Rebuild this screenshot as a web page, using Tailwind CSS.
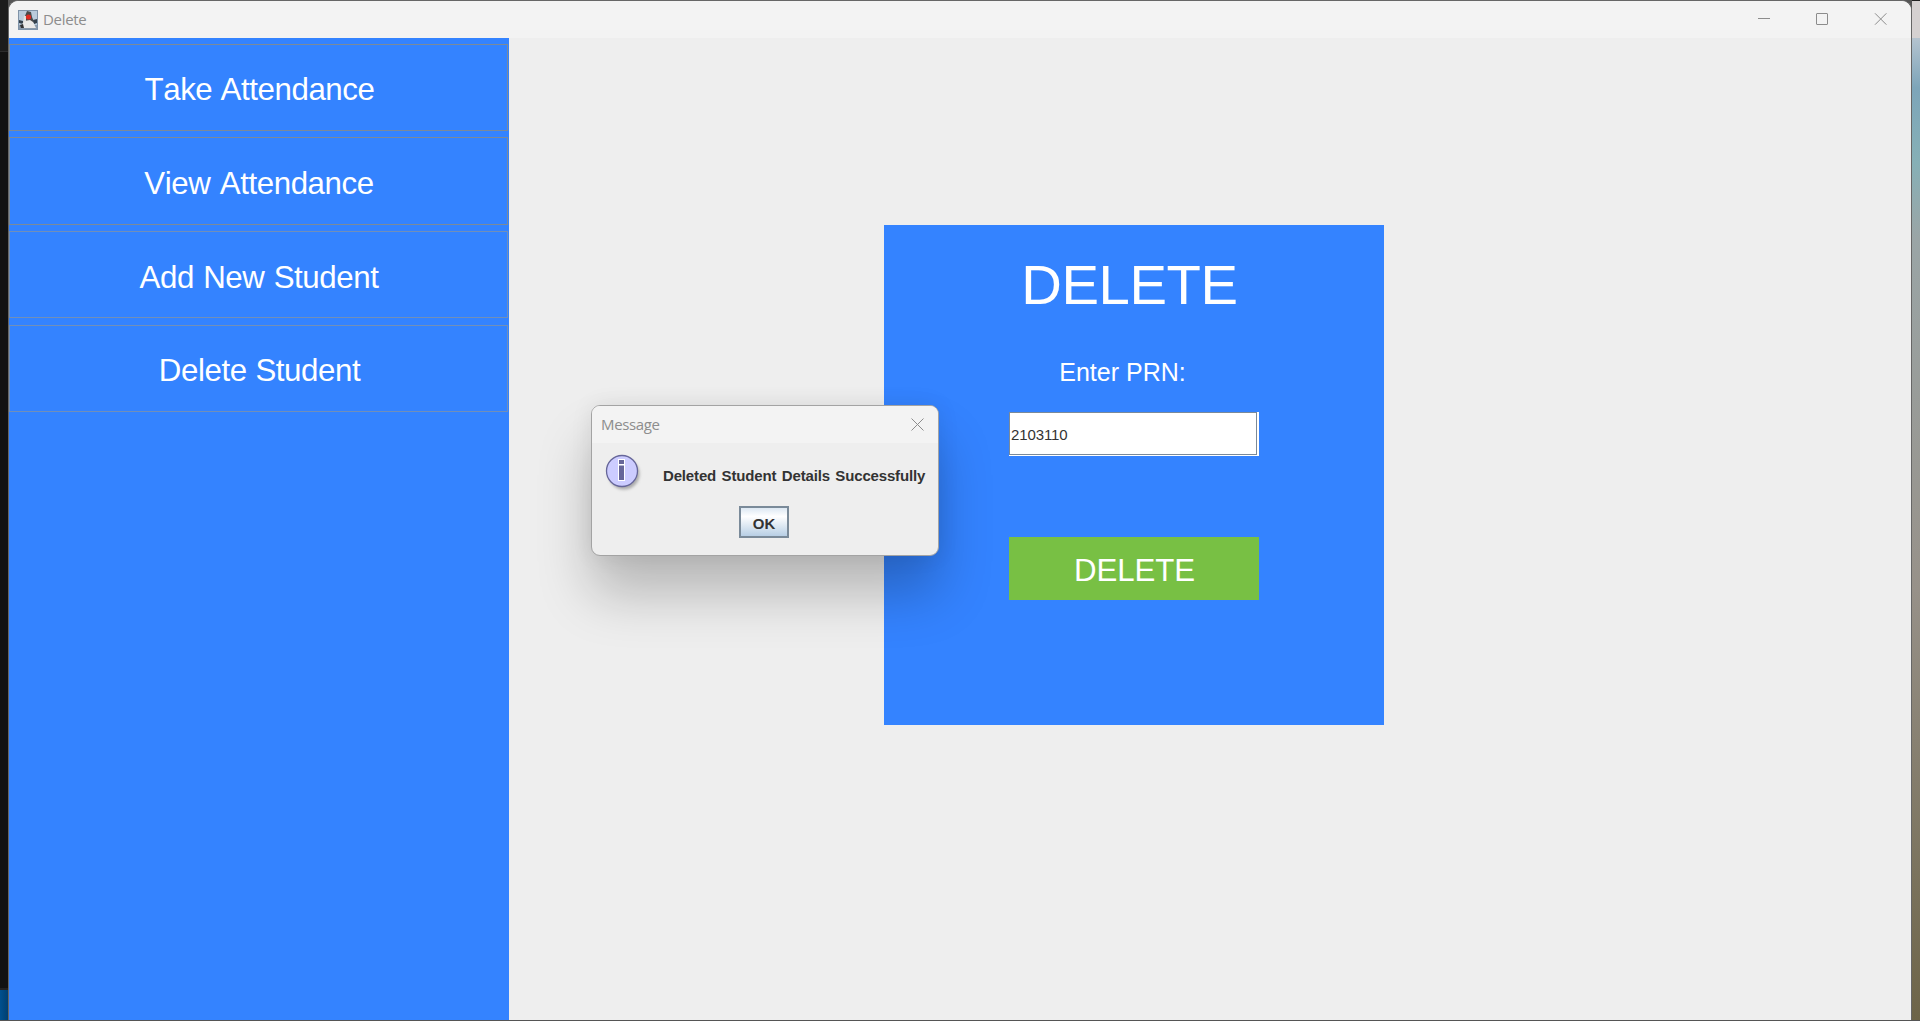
<!DOCTYPE html>
<html lang="en"><head><meta charset="utf-8"><title>Delete</title>
<script src="https://cdn.jsdelivr.net/npm/@tailwindcss/browser@4"></script></head>
<body class="h-[1021px] w-[1920px] overflow-hidden bg-[#555] font-['Liberation_Sans',Arial,sans-serif]">
<div class="relative flex h-full w-full pb-px">
  <div class="flex h-full w-[8px] flex-col bg-[#121212]">
    <div class="h-[52px] border-b border-[#2c2c2c] bg-[#1c1c1c]"></div>
    <div class="grow bg-[#121212]"></div>
    <div class="h-[32px] border-t-2 border-[#222] bg-linear-to-r from-[#00508f] to-[#003f70]"></div>
  </div>
  <div class="flex h-full w-[1904px] flex-col overflow-hidden rounded-t-[10px] border-x border-t border-[#666] bg-[#eeeeee]">
    <header class="flex h-[37px] shrink-0 items-center bg-[#f3f3f3] pl-[9px]">
      <svg class="h-5 w-5" viewBox="0 0 20 20">
        <rect x=".5" y=".5" width="19" height="19" fill="#b9cbdc" stroke="#7f93a8"/>
        <path d="M1 15h18v4H1z" fill="#8b9aab"/>
        <path d="M7 6 9 1l4 1 1 5 2 5-2 3-8 1-1-3 2-4z" fill="#4a4a4a"/>
        <path d="M1 10l4 1v3l-4-1zM15 10l4-1v4l-3 1z" fill="#35414c"/>
        <path d="M6 11l6-1 3 2 3 6H5l-2-2z" fill="#eceae8"/>
        <path d="M6 6l2 0 0 5-3 2z" fill="#e4e2e0"/>
        <path d="M2 15l3-1 1 4-3 0z" fill="#333"/>
        <circle cx="10.500" cy="7" r="2.600" fill="#e02c24"/>
      </svg>
      <span class="ml-[5px] font-['Open_Sans',sans-serif] text-[15px] tracking-[-0.3px] text-[#8d8d8d]">Delete</span>
      <svg class="ml-auto mr-[24px] h-3 w-[130px] -translate-y-px" viewBox="0 0 130 12" fill="none" stroke="#8c8c8c">
        <path d="M1 5.500h12"/><rect x="59.500" y=".5" width="11" height="11" rx=".5"/><path d="M118 .3l11.400 11.400M129.400 .3 118 11.700"/>
      </svg>
    </header>
    <div class="flex min-h-0 grow">
      <nav class="flex w-[500px] shrink-0 flex-col bg-[#3483ff] pr-px pt-[6px] text-[31.25px] tracking-[-0.42px] text-white [font-kerning:none]">
        <button class="mb-[6px] h-[87px] border border-[#7b8a99] pl-[2px] pt-[5px]">Take Attendance</button>
        <button class="mb-[6px] h-[88px] border border-[#7b8a99] pl-px pt-[6px] [word-spacing:1.2px]">View Attendance</button>
        <button class="mb-[7px] h-[87px] border border-[#718fb8] pl-px pt-[7px] [word-spacing:1px]">Add New Student</button>
        <button class="h-[87px] border border-[#718fb8] pl-[2px] pt-[6px] [word-spacing:0.5px]">Delete Student</button>
      </nav>
      <main class="pl-[375px] pt-[187px]">
        <section class="flex h-[500px] w-[500px] flex-col items-center bg-[#3483ff] text-white">
          <h1 class="mt-[28px] h-[64px] pr-[9px] text-[56.25px] leading-[64px] tracking-[-0.4px]">DELETE</h1>
          <label class="mt-[41px] h-[28px] pr-[23px] text-[25px] leading-[28px]">Enter PRN:</label>
          <div class="mt-[26px] h-[44px] w-[250px] border-r-2 border-b border-white bg-white">
            <div class="flex h-full items-center border border-[#7a8a99] pl-px pt-[3px] text-[15px] tracking-[-0.1px] text-[#333]">2103110</div>
          </div>
          <button class="mt-[81px] h-[63px] w-[250px] bg-[#78c044] pt-[5px] pl-px text-[31.25px] tracking-[-0.1px]">DELETE</button>
        </section>
      </main>
    </div>
  </div>
  <div class="flex h-full w-[8px] flex-col">
    <div class="h-[38px] border-t border-[#222] bg-[#d5d1d1]"></div>
    <div class="h-[50px] bg-linear-to-b from-[#b4c3cf] to-[#7da5b9]"></div>
    <div class="h-[150px] bg-linear-to-b from-[#7da5b9] via-[#86b0b6] to-[#9aa5a6]"></div>
    <div class="grow bg-linear-to-b from-[#9aa5a6] via-[#979189] via-45% to-[#6d6448]"></div>
  </div>

  <div class="absolute left-[591px] top-[405px] flex h-[151px] w-[348px] flex-col overflow-hidden rounded-[9px] border border-[#a3a3a3] bg-[#eeeeee] shadow-[0_38px_54px_rgba(0,0,0,0.23),0_0_22px_rgba(0,0,0,0.08)]">
    <div class="flex h-[37px] items-center justify-between bg-[#f3f3f3] pl-[9px] pr-[14px]">
      <span class="font-['Open_Sans',sans-serif] text-[15px] tracking-[-0.35px] text-[#8d8d8d]">Message</span>
      <svg class="h-[13px] w-[13px]" viewBox="0 0 13 13" fill="none" stroke="#8c8c8c"><path d="M.5.5l12 12M12.500.5l-12 12"/></svg>
    </div>
    <div class="flex h-[62px] pl-[13px] pt-[11px]">
      <svg class="h-10 w-10 shrink-0" viewBox="0 0 40 40">
        <defs><filter id="s" x="-20%" y="-20%" width="150%" height="150%"><feGaussianBlur stdDeviation="1.6"/></filter></defs>
        <circle cx="19" cy="20" r="15.500" fill="#aaa" filter="url(#s)"/>
        <circle cx="17" cy="17" r="15.500" fill="#ccccff" stroke="#666699" stroke-width="1.300"/>
        <path d="M13 5h7v22h-7z" fill="#fff"/><path d="M14 6h5v4h-5zM14 11.500h5V26h-5z" fill="#666699"/>
      </svg>
      <span class="ml-[18px] pt-[13px] whitespace-nowrap text-[15px] leading-[18px] font-bold tracking-[-0.16px] text-[#333] [word-spacing:1.5px]">Deleted Student Details Successfully</span>
    </div>
    <button class="ml-[147px] mt-px h-[32px] w-[50px] border-2 border-[#7a8a99] bg-linear-to-b from-[#dde8f3] via-white via-30% to-[#b8cfe5] pt-[3px] text-[15px] leading-[22px] font-bold text-[#333]">OK</button>
  </div>
</div>
</body></html>
